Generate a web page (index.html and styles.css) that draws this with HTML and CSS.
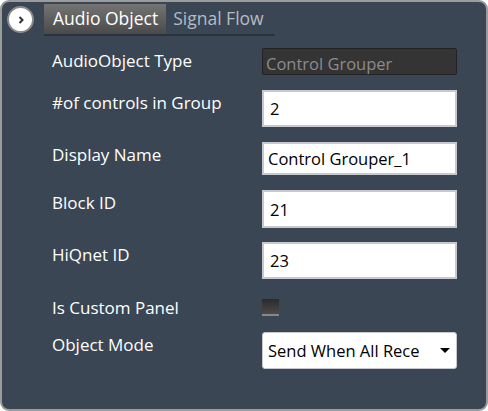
FILE: index.html
```html
<!DOCTYPE html>
<html>
<head>
<meta charset="utf-8">
<link rel="stylesheet" href="styles.css">
</head>
<body>
<div class="panel">
  <div class="header">
    <button class="toggle" aria-label="expand">
      <svg width="10" height="10" viewBox="0 0 10 10"><path d="M3.5 2 L6.5 5 L3.5 8" fill="none" stroke="#333" stroke-width="2"/></svg>
    </button>
    <div class="tabs">
      <div class="tab active">Audio Object</div>
      <div class="tab">Signal Flow</div>
    </div>
  </div>
  <div class="form">
    <div class="row r1">
      <label class="label">AudioObject Type</label>
      <div class="field disabled">Control Grouper</div>
    </div>
    <div class="row r2">
      <label class="label">#of controls in Group</label>
      <div class="field h36">2</div>
    </div>
    <div class="row r3">
      <label class="label">Display Name</label>
      <div class="field h33 tight">Control Grouper_1</div>
    </div>
    <div class="row r4">
      <label class="label">Block ID</label>
      <div class="field h38">21</div>
    </div>
    <div class="row r5">
      <label class="label">HiQnet ID</label>
      <div class="field h37">23</div>
    </div>
    <div class="row r6">
      <label class="label">Is Custom Panel</label>
      <div class="check"></div>
    </div>
    <div class="row r7">
      <label class="label">Object Mode</label>
      <div class="select">
        <span>Send When All Rece</span>
        <svg width="10" height="6" viewBox="0 0 10 6"><path d="M0 0 L10 0 L5 5 Z" fill="#000"/></svg>
      </div>
    </div>
  </div>
</div>
</body>
</html>
```
FILE: styles.css
```css
html, body {
  margin: 0;
  padding: 0;
  background: #ffffff;
}
.panel {
  box-sizing: border-box;
  width: 488px;
  height: 411px;
  border: 2px solid #9c9c9c;
  border-radius: 9px;
  background: #3a4653;
  font-family: "Open Sans", "Noto Sans", sans-serif;
  font-size: 17px;
  color: #ffffff;
  overflow: hidden;
}
.header {
  display: flex;
  align-items: flex-start;
  padding: 2px 0 0 5px;
}
.toggle {
  box-sizing: border-box;
  width: 27px;
  height: 27px;
  margin-top: 2px;
  border-radius: 50%;
  border: 2px solid #8a8a8a;
  background: #ffffff;
  padding: 0;
  display: flex;
  align-items: center;
  justify-content: center;
}
.tabs {
  display: flex;
  margin-left: 10px;
  border-bottom: 2px solid #2a323b;
}
.tab {
  box-sizing: border-box;
  height: 30px;
  padding: 0 11px 0 7px;
  line-height: 29px;
  font-size: 17.5px;
  color: #b4bcc4;
}
.tab.active {
  background: linear-gradient(#747474, #4a4a4a);
  color: #ffffff;
  padding: 0 8px 0 9px;
}
.form {
  padding: 12px 0 0 50px;
}
.row {
  display: flex;
  align-items: flex-start;
}
.label {
  width: 210px;
  padding-top: 3px;
  line-height: 20px;
}
.field {
  box-sizing: border-box;
  width: 195px;
  height: 36px;
  border: 2px solid #c6cad0;
  background: #ffffff;
  color: #000000;
  padding: 0 0 0 6px;
  font-size: 16.5px;
  display: flex;
  align-items: center;
}
.field.disabled {
  height: 27px;
  border: 1px solid #222;
  border-radius: 2px;
  background: #343434;
  color: #8c8c8c;
  padding-left: 3px;
  padding-top: 3px;
}
.field.tight { padding-left: 4px; }
.h33 { height: 33px; }
.h36 { height: 37px; }
.h37 { height: 37px; }
.h38 { height: 38px; }
.r2 { margin-top: 15px; }
.r3 { margin-top: 15px; }
.r4 { margin-top: 15px; }
.r5 { margin-top: 14px; }
.r6 { margin-top: 16px; }
.r7 { margin-top: 14px; }
.check {
  box-sizing: border-box;
  width: 17px;
  height: 17px;
  margin-top: 4px;
  background: linear-gradient(#2b2b2b, #4a4a4a);
  border-bottom: 2px solid #888;
}
.select {
  box-sizing: border-box;
  width: 195px;
  height: 37px;
  border: 1px solid #c6cad0;
  border-radius: 3px;
  background: #ffffff;
  color: #000;
  font-size: 16.5px;
  display: flex;
  align-items: center;
  justify-content: space-between;
  padding: 0 6px 0 5px;
}
```
